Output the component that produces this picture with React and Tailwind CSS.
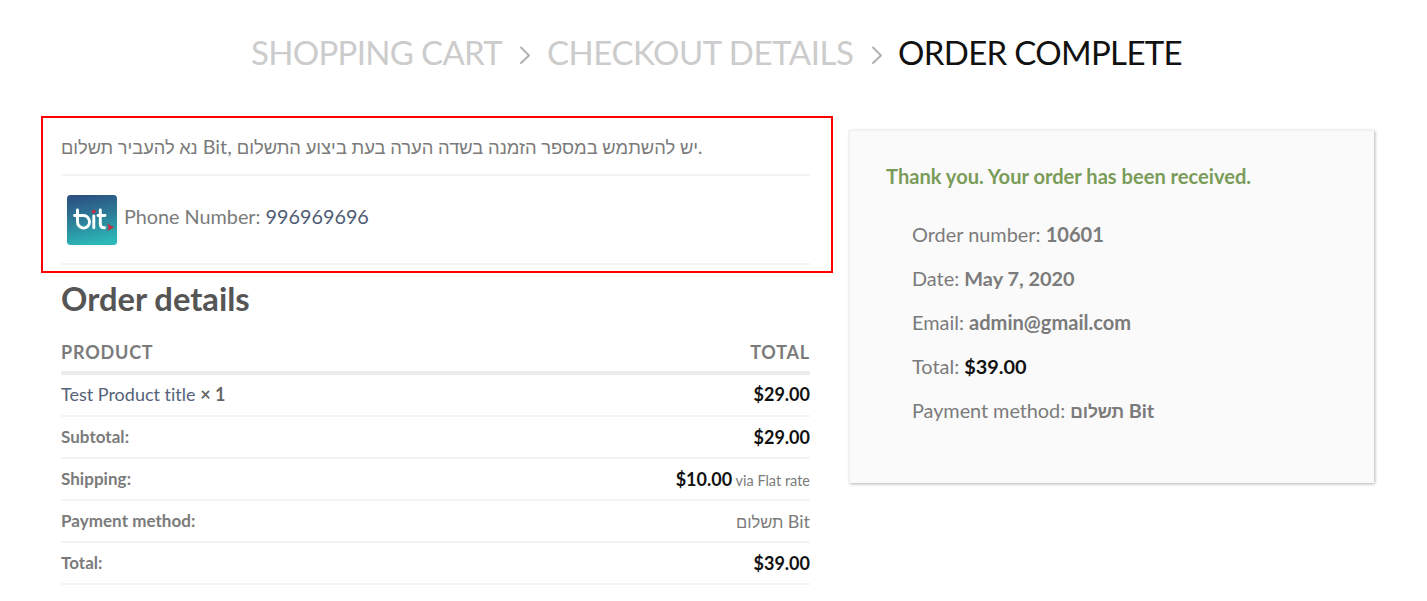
const rows = [
  { label: "Subtotal:", value: "$29.00" },
  { label: "Shipping:", value: "$10.00", note: "via Flat rate" },
  { label: "Payment method:", plain: true },
  { label: "Total:", value: "$39.00" },
];

function Chevron({ className }) {
  return (
    <svg viewBox="0 0 12 18" className={`h-[18px] w-3 shrink-0 ${className}`} fill="none" stroke="#b2b2b2" strokeWidth="2" strokeLinecap="round" strokeLinejoin="round">
      <path d="M2 1.500L10 9.500L2 17" />
    </svg>
  );
}

function BitLogo() {
  return (
    <svg width="50" height="50" viewBox="0 0 50 50" className="shrink-0">
      <defs>
        <linearGradient id="bit" x1="0.25" y1="0" x2="0.45" y2="1">
          <stop offset="0" stopColor="#2c5082" />
          <stop offset="0.5" stopColor="#2c7f98" />
          <stop offset="1" stopColor="#2cb8b8" />
        </linearGradient>
      </defs>
      <rect width="50" height="50" rx="3.500" fill="url(#bit)" />
      <g fill="none" stroke="#fff" strokeWidth="2.900" strokeLinecap="round" strokeLinejoin="round">
        <path d="M10.500 15V26.500A6 6.300 0 1 0 16.500 20.500H7.500" />
        <path d="M26.800 21V32.800" />
        <path d="M33.300 15V29Q33.300 32.800 37.500 32.800M31 20.500H38" />
      </g>
      <circle cx="26.800" cy="16.600" r="1.900" fill="#c52d43" />
      <path d="M40 28.500L47.200 32.200L40.200 36L41.500 32.300Z" fill="#c52d43" />
    </svg>
  );
}

export default function App() {
  return (
    <div className="h-[601px] w-[1427px] overflow-hidden bg-white font-['Lato','Liberation_Sans',sans-serif] text-[#7b7b7b] [font-variant-ligatures:none]">
      <nav className="flex h-[116px] items-start pt-[28px] pl-[251px] text-[33px] leading-[49px] whitespace-nowrap text-[#ccc]">
        <span className="w-[268px] tracking-[-0.68px]">SHOPPING CART</span>
        <Chevron className="mt-[18px] mr-[16px]" />
        <span className="w-[324px] tracking-[-0.45px]">CHECKOUT DETAILS</span>
        <Chevron className="mt-[18px] mr-[15px]" />
        <span className="tracking-[-0.67px] text-[#111]">ORDER COMPLETE</span>
      </nav>
      <div className="flex items-start pl-[41px]">
        <main className="w-[792px]">
          <section className="h-[157px] border-2 border-[#ff0000] pr-[21px] pl-[18px]">
            <p className="h-[58px] border-b-2 border-[#f4f4f4] pt-[14px] text-[19.8px] leading-[29px] whitespace-nowrap">
              <span className="text-[18.200px]">נא להעביר תשלום</span> Bit, <span className="text-[18.350px]">יש להשתמש במספר הזמנה בשדה הערה בעת ביצוע התשלום.</span>
            </p>
            <div className="flex h-[89px] items-center gap-[7px] border-b-2 border-[#f4f4f4] pl-[6px] text-[19.8px]">
              <BitLogo />
              <span className="-mt-[5px]">Phone Number: <span className="text-[#4e5b73]">996969696</span></span>
            </div>
          </section>
          <section className="w-[769px] pl-5">
            <h2 className="h-[66px] pt-[5px] text-[32.7px] leading-[41px] font-bold text-[#555]">Order details</h2>
            <div className="flex h-[36px] justify-between border-b-4 border-[#ececec] text-[18px] leading-[27px] font-bold tracking-[0.8px]">
              <span>PRODUCT</span><span>TOTAL</span>
            </div>
            <div className="flex h-[42px] items-center justify-between border-b-2 border-[#f4f4f4] pb-px text-[18px]">
              <span className="text-[18px] text-[#566279]">Test Product title <b className="text-[#666]">× 1</b></span><b className="text-[#111]">$29.00</b>
            </div>
            {rows.map((r) => (
              <div key={r.label} className="flex h-[42px] items-center justify-between border-b-2 border-[#f4f4f4] text-[17px]">
                <b className="tracking-[0.04px]">{r.label}</b>
                {r.plain ? (
                  <span><span className="text-[16.5px]">תשלום</span> <span className="text-[18px]">Bit</span></span>
                ) : (
                  <span>
                    <b className="text-[18px] text-[#111]">{r.value}</b>
                    {r.note && <span className="text-[14.5px]"> {r.note}</span>}
                  </span>
                )}
              </div>
            ))}
          </section>
        </main>
        <aside className="mt-[14px] ml-4 h-[353px] w-[525px] border-t border-l border-[#f0f0f0] bg-[#fafafa] pt-[30px] pl-[36px] text-[19.9px] leading-[30px] shadow-[1px_1px_3px_rgba(0,0,0,0.3)]">
          <p className="mb-[28px] text-[20.1px] font-bold text-[#7a9c59]">Thank you. Your order has been received.</p>
          <ul className="flex flex-col gap-[14px] pl-[26px]">
            <li>Order number: <b className="text-[20.1px]">10601</b></li>
            <li>Date: <b>May 7, 2020</b></li>
            <li>Email: <b className="text-[20.1px]">admin@gmail.com</b></li>
            <li>Total: <b className="text-[#111]">$39.00</b></li>
            <li className="tracking-[-0.06px]">Payment method: <b><span className="text-[17.500px] leading-none">תשלום</span> Bit</b></li>
          </ul>
        </aside>
      </div>
    </div>
  );
}
